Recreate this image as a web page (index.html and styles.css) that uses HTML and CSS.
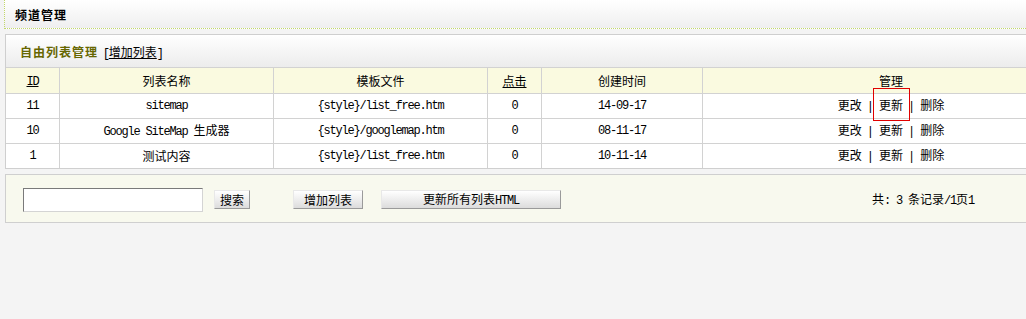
FILE: index.html
```html
<!DOCTYPE html>
<html lang="zh-CN">
  <head>
    <meta charset="UTF-8" />
    <title>频道管理</title>
    <link rel="stylesheet" href="styles.css">
  </head>
  <body>
    <div class="top-bar">频道管理</div>

    <div class="panel">
      <div class="panel-title">
        <b>自由列表管理</b>
        <span class="en">[</span><a href="#" class="u">增加列表</a><span class="en">]</span>
      </div>
      <table class="list">
        <tr class="head">
          <td class="c-id"><a href="#" class="u en">ID</a></td>
          <td class="c-name">列表名称</td>
          <td class="c-tpl">模板文件</td>
          <td class="c-hit"><a href="#" class="u">点击</a></td>
          <td class="c-time">创建时间</td>
          <td>管理</td>
        </tr>
        <tr>
          <td class="en">11</td>
          <td class="en">sitemap</td>
          <td class="en">{style}/list_free.htm</td>
          <td class="en">0</td>
          <td class="en">14-09-17</td>
          <td class="ops"><a href="#">更改</a><span class="sep">|</span><a href="#" class="mark">更新</a><span class="sep">|</span><a href="#">删除</a></td>
        </tr>
        <tr>
          <td class="en">10</td>
          <td><span class="en">Google SiteMap </span>生成器</td>
          <td class="en">{style}/googlemap.htm</td>
          <td class="en">0</td>
          <td class="en">08-11-17</td>
          <td class="ops"><a href="#">更改</a><span class="sep">|</span><a href="#">更新</a><span class="sep">|</span><a href="#">删除</a></td>
        </tr>
        <tr>
          <td class="en">1</td>
          <td>测试内容</td>
          <td class="en">{style}/list_free.htm</td>
          <td class="en">0</td>
          <td class="en">10-11-14</td>
          <td class="ops"><a href="#">更改</a><span class="sep">|</span><a href="#">更新</a><span class="sep">|</span><a href="#">删除</a></td>
        </tr>
      </table>
    </div>

    <div class="panel footer">
      <input type="text" class="keyword" />
      <button class="btn btn-search">搜索</button>
      <button class="btn btn-add">增加列表</button>
      <button class="btn btn-all">更新所有列表<span class="en">HTML</span></button>
      <div class="stats">共<span class="en">: 3 </span>条记录<span class="en">/1</span>页<span class="en">1</span></div>
    </div>
  </body>
</html>
```

FILE: styles.css
```css
html, body {
  overflow: hidden;
}
body {
  margin: 0;
  background-color: #f4f4f4;
  font-family: "Noto Sans CJK SC", sans-serif;
  font-size: 12px;
  line-height: 16px;
  color: #000;
}
a {
  color: #000;
  text-decoration: none;
}
a.u {
  text-decoration: underline;
}
.en {
  font-family: "Liberation Mono", monospace;
  letter-spacing: -1.2px;
}

.top-bar {
  margin-left: 4px;
  height: 28px;
  line-height: 29px;
  padding-left: 10px;
  border-left: 1px dotted #c2d86a;
  border-bottom: 1px dotted #c2d86a;
  background: linear-gradient(#ffffff, #efefef);
  font-weight: bold;
  letter-spacing: 1px;
}

.panel {
  margin: 5px 0 0 5px;
  width: 1073px;
  border: 1px solid #cfcfcf;
}
.panel-title {
  height: 32px;
  line-height: 33px;
  padding-left: 14px;
  background: linear-gradient(#ffffff, #ececec);
}
.panel-title b {
  color: #666600;
  letter-spacing: 1px;
  margin-right: 2px;
}

.list {
  width: 100%;
  border-collapse: collapse;
  table-layout: fixed;
}
.list td {
  height: 24px;
  padding: 0;
  text-align: center;
  border-top: 1px solid #d2d2d2;
  border-left: 1px solid #d2d2d2;
  background-color: #fff;
}
.list td:first-child {
  border-left: 0;
}
.list .head td {
  height: 25px;
  background-color: #fafae0;
}
.c-id { width: 53px; }
.c-name { width: 213px; }
.c-tpl { width: 213px; }
.c-hit { width: 53px; }
.c-time { width: 160px; }

.ops .sep {
  font-family: "Liberation Mono", monospace;
  margin: 0 5px;
}
.mark {
  position: relative;
}
.mark::after {
  content: "";
  position: absolute;
  left: -6px;
  right: -7px;
  top: -8px;
  bottom: -8px;
  border: 1px solid #e00000;
}

.footer {
  height: 47px;
  display: flex;
  align-items: flex-start;
  background-color: #f8f9ee;
}
.keyword {
  box-sizing: border-box;
  width: 180px;
  height: 24px;
  margin: 13px 0 0 17px;
  border: 1px solid;
  border-color: #7a7a7a #d4d4d4 #d4d4d4 #7a7a7a;
  background-color: #fff;
}
.btn {
  box-sizing: border-box;
  height: 19px;
  margin-top: 15px;
  padding: 0;
  font-family: "Noto Sans CJK SC", sans-serif;
  font-size: 12px;
  line-height: 16px;
  color: #000;
  background: linear-gradient(#ffffff, #dcdcdc);
  border: 1px solid;
  border-color: #e8e8e8 #9a9a9a #9a9a9a #e8e8e8;
}
.btn-search {
  width: 36px;
  margin-left: 11px;
}
.btn-add {
  width: 70px;
  margin-left: 43px;
}
.btn-all {
  width: 180px;
  margin-left: 18px;
}
.stats {
  margin: 16px 0 0 311px;
}
```
